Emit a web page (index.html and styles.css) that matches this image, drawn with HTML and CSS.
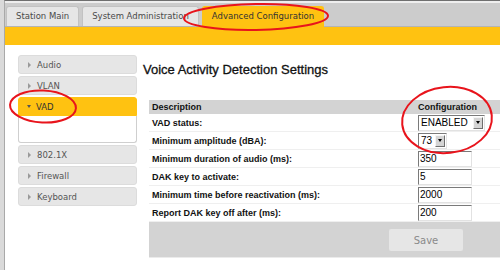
FILE: index.html
```
<!DOCTYPE html>
<html>
<head>
    <title>Advanced Configuration</title>
    <meta charset="utf-8">
    <link rel="stylesheet" href="styles.css">
</head>
<body>
    <div class="page">
        <div class="frame">
            <div class="tabbar">
                <div class="tab">Station Main</div>
                <div class="tab">System Administration</div>
                <div class="tab active">Advanced Configuration</div>
            </div>
            <div class="stripe"></div>
            <div class="content">
                <ul class="sidenav">
                    <li class="nav-item"><span class="tri"></span>Audio</li>
                    <li class="nav-item"><span class="tri"></span>VLAN</li>
                    <li class="nav-group">
                        <div class="nav-item open"><span class="tri-down"></span>VAD</div>
                        <div class="nav-body"></div>
                    </li>
                    <li class="nav-item"><span class="tri"></span>802.1X</li>
                    <li class="nav-item"><span class="tri"></span>Firewall</li>
                    <li class="nav-item"><span class="tri"></span>Keyboard</li>
                </ul>
                <div class="main">
                    <h1>Voice Activity Detection Settings</h1>
                    <table class="settings">
                        <tr class="head">
                            <td class="desc">Description</td>
                            <td>Configuration</td>
                        </tr>
                        <tr>
                            <td class="desc">VAD status:</td>
                            <td><span class="select wide"><span class="val">ENABLED</span><span class="arrow"></span></span></td>
                        </tr>
                        <tr>
                            <td class="desc">Minimum amplitude (dBA):</td>
                            <td><span class="select small"><span class="val">73</span><span class="arrow"></span></span></td>
                        </tr>
                        <tr>
                            <td class="desc">Minimum duration of audio (ms):</td>
                            <td><input class="field" type="text" value="350"></td>
                        </tr>
                        <tr>
                            <td class="desc">DAK key to activate:</td>
                            <td><input class="field" type="text" value="5"></td>
                        </tr>
                        <tr>
                            <td class="desc">Minimum time before reactivation (ms):</td>
                            <td><input class="field" type="text" value="2000"></td>
                        </tr>
                        <tr>
                            <td class="desc">Report DAK key off after (ms):</td>
                            <td><input class="field" type="text" value="200"></td>
                        </tr>
                    </table>
                    <div class="actions">
                        <button class="save">Save</button>
                    </div>
                </div>
            </div>
        </div>
        <svg class="marks" width="500" height="270" viewBox="0 0 500 270">
            <ellipse cx="256" cy="17" rx="72" ry="13" transform="rotate(-1 256 17)"/>
            <ellipse cx="43" cy="106.5" rx="33" ry="16" transform="rotate(3 43 106)"/>
            <ellipse cx="447" cy="120" rx="45" ry="33" transform="rotate(-6 447 120)"/>
        </svg>
    </div>
</body>
</html>
```
FILE: styles.css
```
*{
    padding: 0;
    margin: 0;
    box-sizing: border-box;
}
html, body{
    width: 500px;
    height: 270px;
    overflow: hidden;
    background: #ffffff;
}
.page{
    position: relative;
    height: 270px;
    border-left: 4px solid #dadada;
}
.frame{
    height: 100%;
    border-left: 1px solid #a9a9a9;
    border-top: 1px solid #6f6f6f;
}
.tabbar{
    display: flex;
    align-items: flex-end;
    gap: 3px;
    height: 20px;
    padding: 3px 0 0 1px;
    border-top: 2px solid #eeeeee;
    border-bottom: 1px solid #b4b4b4;
    background: #cccccc;
    box-sizing: content-box;
}
.tab{
    height: 20px;
    padding: 0 9px;
    border: 1px solid #c2c2c2;
    border-bottom: 0;
    border-radius: 3px 3px 0 0;
    background: #e6e6e6;
    color: #4a4a4a;
    font-family: "DejaVu Sans", Verdana, sans-serif;
    font-size: 8.5px;
    line-height: 19px;
    white-space: nowrap;
}
.tab.active{
    height: 21px;
    margin-bottom: -1px;
    background: #ffc211;
    border-color: #ffc211;
    color: #333333;
}
.stripe{
    height: 18px;
    background: #ffc211;
}
.content{
    display: flex;
    gap: 6px;
    padding: 10px 0 0 13px;
}
.sidenav{
    list-style: none;
    width: 119px;
    flex: none;
    display: flex;
    flex-direction: column;
    gap: 2px;
}
.nav-item{
    display: flex;
    align-items: center;
    gap: 6px;
    height: 19px;
    padding-left: 9px;
    border: 1px solid #dcdcdc;
    border-radius: 3px;
    background: #e6e6e6;
    color: #555555;
    font-family: "DejaVu Sans", Verdana, sans-serif;
    font-size: 8.5px;
}
.tri{
    width: 0;
    height: 0;
    border-top: 3px solid transparent;
    border-bottom: 3px solid transparent;
    border-left: 3px solid #9a9a9a;
}
.nav-item.open{
    padding-left: 8px;
    gap: 5px;
    border-color: #ffc211;
    border-radius: 3px 3px 0 0;
    background: #ffc211;
    color: #333333;
}
.tri-down{
    width: 0;
    height: 0;
    border-left: 2.5px solid transparent;
    border-right: 2.5px solid transparent;
    border-top: 3px solid #555555;
}
.nav-body{
    height: 27px;
    border: 1px solid #cfcfcf;
    border-top: 0;
    border-radius: 0 0 3px 3px;
    background: #ffffff;
}
.main{
    flex: 1;
    min-width: 0;
}
h1{
    margin-top: 7px;
    font-family: "Liberation Sans", Arial, sans-serif;
    font-size: 13px;
    font-weight: normal;
    line-height: 15px;
    color: #111111;
    -webkit-text-stroke: 0.3px #111111;
}
.settings{
    margin: 23px 0 0 6px;
    width: 351px;
    table-layout: fixed;
    border-collapse: separate;
    border-spacing: 0;
    font-family: "Liberation Sans", Arial, sans-serif;
    font-size: 9px;
    font-weight: bold;
    color: #111111;
}
.settings td{
    height: 18px;
    padding: 0 3px;
    border-bottom: 1px solid #efefef;
    vertical-align: middle;
    white-space: nowrap;
    overflow: hidden;
}
.settings td.desc{
    width: 266px;
}
.settings tr.head td{
    height: 14px;
    background: #d3d3d3;
    border-bottom: 0;
}
.select{
    display: flex;
    align-items: center;
    height: 16px;
    padding: 1px;
    border: 1px solid #e2e2e2;
    border-top-color: #7a7a7a;
    border-left-color: #7a7a7a;
    background: #ffffff;
    font-family: "Liberation Sans", Arial, sans-serif;
    font-size: 10px;
    font-weight: normal;
    color: #000000;
}
.select.wide{
    width: 67px;
}
.select.small{
    width: 29px;
}
.select .val{
    flex: 1;
    padding-left: 1px;
}
.select .arrow{
    width: 10px;
    height: 12px;
    border: 1px solid #f4f4f4;
    border-right-color: #6e6e6e;
    border-bottom-color: #6e6e6e;
    background: #d4d4d4;
    display: flex;
    align-items: center;
    justify-content: center;
}
.select .arrow::after{
    content: "";
    border-left: 2.5px solid transparent;
    border-right: 2.5px solid transparent;
    border-top: 3px solid #000000;
}
.field{
    display: block;
    width: 54px;
    height: 16px;
    padding: 0 1px;
    border: 1px solid #e2e2e2;
    border-top-color: #7a7a7a;
    border-left-color: #7a7a7a;
    outline: none;
    font-family: "Liberation Sans", Arial, sans-serif;
    font-size: 10px;
    color: #000000;
}
.actions{
    margin-left: 6px;
    width: 351px;
    height: 36px;
    padding: 7px 0 0 240px;
    background: #d3d3d3;
    border-bottom: 1px solid #ebebeb;
}
.save{
    display: block;
    width: 74px;
    height: 22px;
    border: 0;
    border-radius: 2px;
    background: #e6e6e6;
    color: #8a8a8a;
    font-family: "DejaVu Sans", Verdana, sans-serif;
    font-size: 10px;
}
.marks{
    position: absolute;
    left: -4px;
    top: 0;
    pointer-events: none;
}
.marks ellipse{
    fill: none;
    stroke: #e8141c;
    stroke-width: 2;
}
```
